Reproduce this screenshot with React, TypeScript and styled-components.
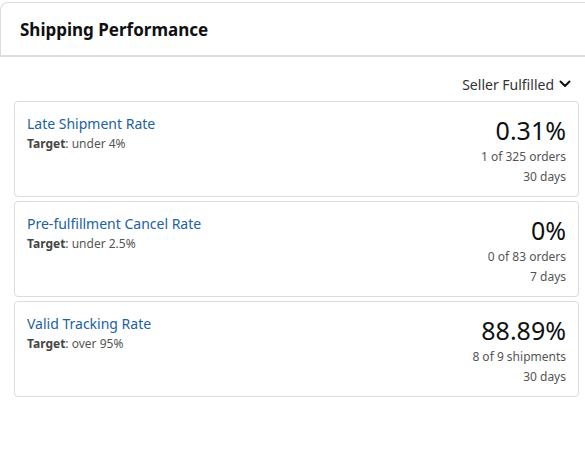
import React from "react";
import styled, { createGlobalStyle } from "styled-components";

const Global = createGlobalStyle`
  html, body { margin: 0; padding: 0; background: #fff; overflow: hidden; }
  body { font-family: "Noto Sans", "Open Sans", Arial, sans-serif; color: #0f1111; }
`;

const Panel = styled.section`
  margin-top: 2px;
  width: 600px;
`;

const Header = styled.header`
  height: 52px;
  display: flex;
  align-items: center;
  padding-left: 19px;
  border-top: 1px solid #dcdcdc;
  border-left: 1px solid #dcdcdc;
  border-top-left-radius: 8px;
  border-bottom: 2px solid #dedede;
`;

const Title = styled.h2`
  margin: 0;
  font-size: 17px;
  font-weight: 700;
  color: #0f1111;
`;

const Body = styled.div`
  padding: 15px 0 0 14px;
  width: 565px;
  display: flex;
  flex-direction: column;
`;

const FilterRow = styled.div`
  display: flex;
  justify-content: flex-end;
  padding-right: 8px;
  height: 24px;
  align-items: center;
  margin-bottom: 5px;
`;

const FilterButton = styled.button`
  border: none;
  background: none;
  padding: 0;
  display: flex;
  align-items: center;
  gap: 5px;
  font-family: inherit;
  font-size: 14px;
  color: #333;
  cursor: pointer;
`;

const Cards = styled.div`
  display: flex;
  flex-direction: column;
  gap: 4px;
`;

const Card = styled.div`
  height: 96px;
  box-sizing: border-box;
  border: 1px solid #dcdcdc;
  border-radius: 4px;
  padding: 11px 12px 0 12px;
  display: flex;
  justify-content: space-between;
`;

const Left = styled.div`
  display: flex;
  flex-direction: column;
`;

const MetricName = styled.a`
  font-size: 14px;
  line-height: 22px;
  color: #2162a1;
  text-decoration: none;
`;

const Target = styled.div`
  font-size: 12px;
  line-height: 18px;
  color: #555;
  b { font-weight: 700; color: #444; }
`;

const Right = styled.div`
  display: flex;
  flex-direction: column;
  align-items: flex-end;
`;

const Value = styled.div`
  font-size: 25px;
  line-height: 34px;
  color: #0f1111;
`;

const Sub = styled.div`
  font-size: 12px;
  line-height: 20px;
  color: #555;
`;

const metrics = [
  { name: "Late Shipment Rate", target: "under 4%", value: "0.31%", detail: "1 of 325 orders", period: "30 days" },
  { name: "Pre-fulfillment Cancel Rate", target: "under 2.5%", value: "0%", detail: "0 of 83 orders", period: "7 days" },
  { name: "Valid Tracking Rate", target: "over 95%", value: "88.89%", detail: "8 of 9 shipments", period: "30 days" },
];

export default function App() {
  return (
    <>
      <Global />
      <Panel>
        <Header>
          <Title>Shipping Performance</Title>
        </Header>
        <Body>
          <FilterRow>
            <FilterButton>
              Seller Fulfilled
              <svg width="12" height="8" viewBox="0 0 12 8">
                <path d="M1.5 1.5 L6 6 L10.5 1.5" fill="none" stroke="#111" strokeWidth="2" strokeLinecap="round" strokeLinejoin="round" />
              </svg>
            </FilterButton>
          </FilterRow>
          <Cards>
            {metrics.map((m) => (
              <Card key={m.name}>
                <Left>
                  <MetricName href="#">{m.name}</MetricName>
                  <Target><b>Target</b>: {m.target}</Target>
                </Left>
                <Right>
                  <Value>{m.value}</Value>
                  <Sub>{m.detail}</Sub>
                  <Sub>{m.period}</Sub>
                </Right>
              </Card>
            ))}
          </Cards>
        </Body>
      </Panel>
    </>
  );
}
